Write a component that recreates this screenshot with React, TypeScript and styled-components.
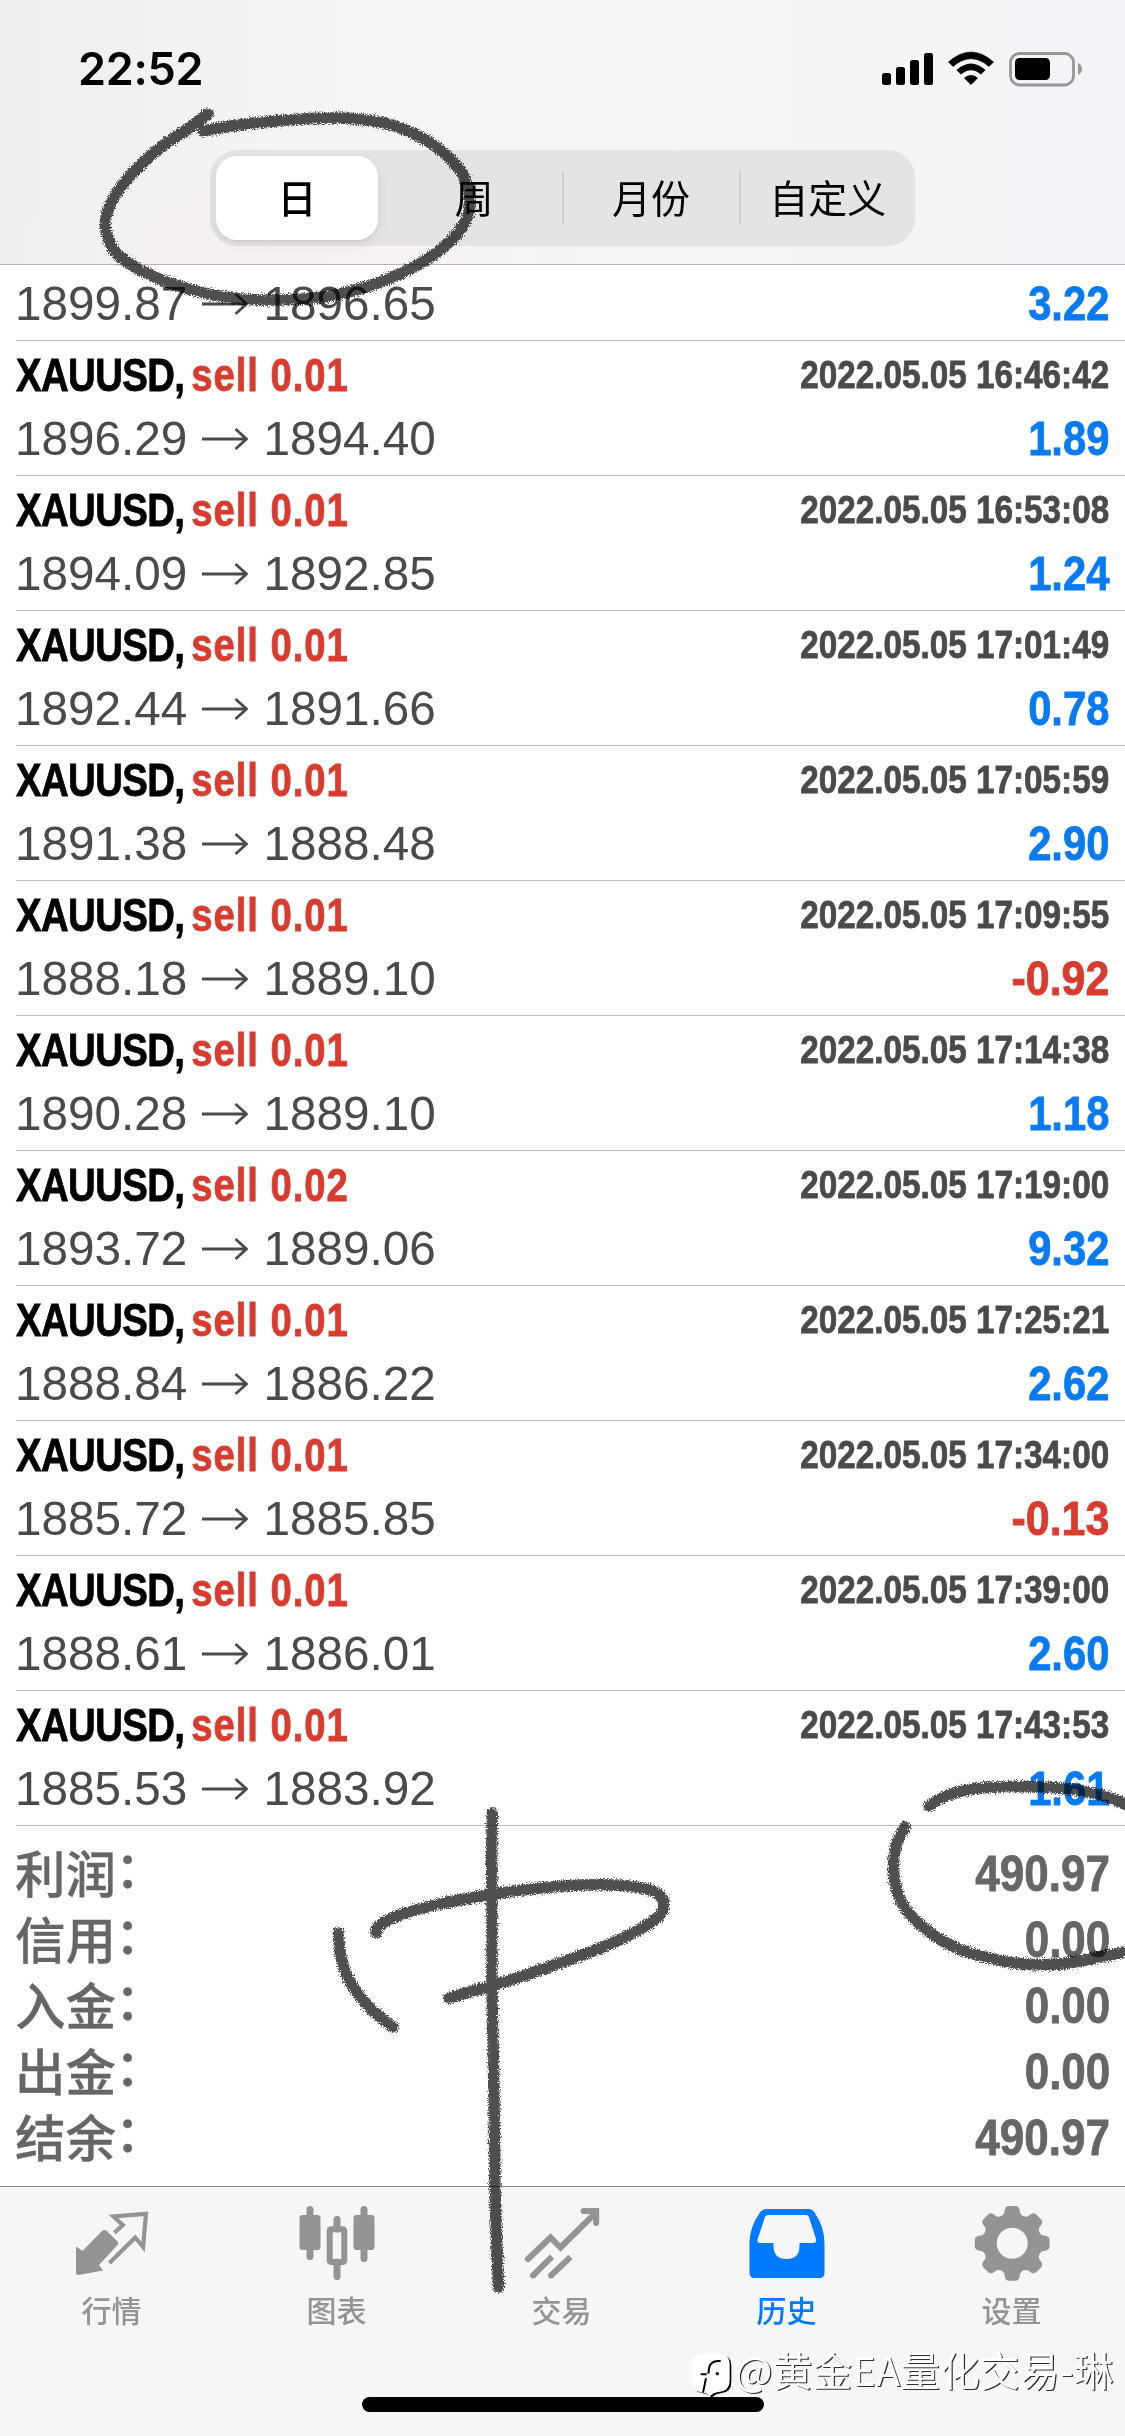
import React from "react";
import styled, { createGlobalStyle } from "styled-components";

const SANS = `"Liberation Sans", Arial, "Noto Sans CJK SC", sans-serif`;
const CJK = `"Noto Sans CJK SC", "Liberation Sans", sans-serif`;
const BLUE = "#087af2";
const RED = "#d93c2f";
const INK = "#4a4a4d";

const GlobalStyle = createGlobalStyle`
  * { box-sizing: border-box; }
  body { margin: 0; background: #fff; }
`;

const Screen = styled.div`
  position: relative;
  width: 1125px;
  height: 2436px;
  overflow: hidden;
  display: flex;
  flex-direction: column;
  background: #fff;
  font-family: ${SANS};
`;

const Header = styled.header`
  height: 265px;
  flex: none;
  display: flex;
  flex-direction: column;
  border-bottom: 1px solid #b2b2b4;
  background:
    radial-gradient(ellipse 300px 140px at 300px 265px, rgba(250, 240, 240, 0.8), rgba(250, 240, 240, 0)),
    linear-gradient(to right, rgba(236, 236, 238, 0.7) 0%, rgba(246, 246, 246, 0) 30%),
    linear-gradient(to right, #f5f5f5 0%, #f6f6f6 60%, #f3f4f8 100%);
`;

const StatusBar = styled.div`
  height: 150px;
  flex: none;
  display: flex;
  justify-content: space-between;
  align-items: flex-start;
  padding: 40px 41px 0 78px;
`;

const Clock = styled.div`
  font: 600 45px/58px Inter, sans-serif;
  letter-spacing: -0.3px;
  color: #000;
`;

const StatusIcons = styled.svg`
  display: block;
  margin-top: 10px;
`;

const Segmented = styled.div`
  width: 705px;
  height: 96px;
  margin: 0 0 0 210px;
  display: grid;
  grid-template-columns: 176.5px 177px 177px 174.5px;
  align-items: center;
  border-radius: 27px;
  background: #e4e4e6;
`;

const Segment = styled.div<{ $active?: boolean; $divider?: boolean }>`
  height: ${(p) => (p.$active ? 84 : 54)}px;
  margin: ${(p) => (p.$active ? "0 8.5px 0 6px" : "0")};
  padding-bottom: 3px;
  display: flex;
  align-items: center;
  justify-content: center;
  border-radius: ${(p) => (p.$active ? 21 : 0)}px;
  border-right: ${(p) => (p.$divider ? "2px solid #cfcfd2" : "0")};
  background: ${(p) => (p.$active ? "#fff" : "transparent")};
  box-shadow: ${(p) => (p.$active ? "0 4px 12px rgba(0,0,0,0.08), 0 2px 2px rgba(0,0,0,0.04)" : "none")};
  font: ${(p) => (p.$active ? 500 : 400)} 39px/51px ${CJK};
  color: #000;
`;

const List = styled.main`
  flex: none;
  display: flex;
  flex-direction: column;
`;

const Row = styled.div<{ $partial?: boolean }>`
  height: ${(p) => (p.$partial ? 76 : 135)}px;
  margin-left: 16px;
  padding: ${(p) => (p.$partial ? 3 : 7)}px 16px 0 0;
  border-bottom: 1px solid #bebec1;
`;

const Line = styled.div<{ $h: number; $gap?: number }>`
  display: flex;
  justify-content: space-between;
  align-items: center;
  height: ${(p) => p.$h}px;
  margin-bottom: ${(p) => p.$gap || 0}px;
  line-height: ${(p) => p.$h}px;
  white-space: nowrap;
`;

const Condensed = styled.span<{ $size: number; $scale: number; $color: string; $right?: boolean; $spacing?: number }>`
  display: inline-block;
  font-size: ${(p) => p.$size}px;
  font-weight: 700;
  letter-spacing: ${(p) => p.$spacing || 0}px;
  color: ${(p) => p.$color};
  -webkit-text-stroke: 0.8px ${(p) => p.$color};
  transform: scaleX(${(p) => p.$scale});
  transform-origin: ${(p) => (p.$right ? "right" : "left")} center;
`;

const Side = styled.span`
  margin-left: -4px;
  letter-spacing: 1.15px;
  color: ${RED};
  -webkit-text-stroke: 0.8px ${RED};
`;

const Prices = styled.span`
  display: flex;
  align-items: center;
  margin-left: -1px;
  font-size: 47.7px;
  color: ${INK};
`;

const Arrow = styled.svg`
  display: block;
  margin: 0 15px 0 14px;
`;

const Summary = styled.section`
  height: 360px;
  flex: none;
  padding: 15px 15px 0 16px;
`;

const SumLabel = styled.span`
  display: flex;
  margin: -7px 0 0 -1px;
  font: 500 50.5px/60px ${CJK};
  color: #666;
  -webkit-text-stroke: 0.3px #666;
`;

const Colon = styled.span`
  margin: -5px 0 0 -1px;
`;

const TabBar = styled.nav`
  height: 250px;
  flex: none;
  display: grid;
  grid-template-columns: repeat(5, 225px);
  border-top: 1px solid #8c8c8c;
  background: #f6f6f6;
`;

const Tab = styled.div<{ $active?: boolean }>`
  display: flex;
  flex-direction: column;
  align-items: center;
  padding: 13px 2px 0 0;
  color: ${(p) => (p.$active ? "#007aff" : "#949494")};
  font: 500 30px/44px ${CJK};
  span { margin-top: 3px; }
`;

const HomeIndicator = styled.div`
  position: absolute;
  left: 362px;
  top: 2397px;
  width: 402px;
  height: 15px;
  border-radius: 8px;
  background: #000;
`;

const Scribbles = styled.svg`
  position: absolute;
  left: 0;
  top: 0;
  mix-blend-mode: multiply;
  pointer-events: none;
`;

const Watermark = styled.div`
  position: absolute;
  left: 690px;
  top: 2341px;
  display: flex;
  align-items: center;
  white-space: nowrap;
  font: 400 39.5px/56px ${CJK};
  letter-spacing: 0.35px;
  color: #fff;
  text-shadow: 1.2px 1.2px 0.6px rgba(0, 0, 0, 0.8);
`;

const WatermarkLogo = styled.svg`
  display: block;
  margin-right: -3px;
`;

type Trade = [string, string, string, string, string];

const trades: Trade[] = [
  ["0.01", "2022.05.05 16:46:42", "1896.29", "1894.40", "1.89"],
  ["0.01", "2022.05.05 16:53:08", "1894.09", "1892.85", "1.24"],
  ["0.01", "2022.05.05 17:01:49", "1892.44", "1891.66", "0.78"],
  ["0.01", "2022.05.05 17:05:59", "1891.38", "1888.48", "2.90"],
  ["0.01", "2022.05.05 17:09:55", "1888.18", "1889.10", "-0.92"],
  ["0.01", "2022.05.05 17:14:38", "1890.28", "1889.10", "1.18"],
  ["0.02", "2022.05.05 17:19:00", "1893.72", "1889.06", "9.32"],
  ["0.01", "2022.05.05 17:25:21", "1888.84", "1886.22", "2.62"],
  ["0.01", "2022.05.05 17:34:00", "1885.72", "1885.85", "-0.13"],
  ["0.01", "2022.05.05 17:39:00", "1888.61", "1886.01", "2.60"],
  ["0.01", "2022.05.05 17:43:53", "1885.53", "1883.92", "1.61"],
];

const totals = [
  ["利润", "490.97"],
  ["信用", "0.00"],
  ["入金", "0.00"],
  ["出金", "0.00"],
  ["结余", "490.97"],
];

function PriceLine({ open, close, profit }: { open: string; close: string; profit: string }) {
  const loss = profit.startsWith("-");
  return (
    <Line $h={71}>
      <Prices>
        {open}
        <Arrow width="47" height="24" viewBox="0 0 47 24" fill="none" stroke={INK} strokeWidth="2.8">
          <path d="M1 12H45M34.5 2L45.5 12L34.5 22" />
        </Arrow>
        {close}
      </Prices>
      <Condensed $size={48} $scale={loss ? 0.895 : 0.87} $color={loss ? RED : BLUE} $right>
        {profit}
      </Condensed>
    </Line>
  );
}

/* Smooth curve through a list of points (Catmull-Rom converted to cubic segments). */
function smooth(pts: number[][]) {
  let d = `M${pts[0][0]} ${pts[0][1]}`;
  for (let i = 0; i < pts.length - 1; i++) {
    const a = pts[i - 1] || pts[i];
    const b = pts[i];
    const c = pts[i + 1];
    const e = pts[i + 2] || c;
    d += `C${b[0] + (c[0] - a[0]) / 6} ${b[1] + (c[1] - a[1]) / 6} ${c[0] - (e[0] - b[0]) / 6} ${c[1] - (e[1] - b[1]) / 6} ${c[0]} ${c[1]}`;
  }
  return d;
}

const strokes: number[][][] = [
  [[208, 114], [189, 128], [153.6, 153], [121, 187], [107, 213], [106.4, 232], [118, 255], [150, 275], [189, 289], [232, 298], [279, 300], [329, 296], [375, 284], [421, 263], [453.6, 238], [468, 215], [469, 195], [460, 170], [429, 142], [386, 123.5], [336, 118], [286, 120], [232, 126], [203.6, 131]],
  [[492.3, 1813], [491.7, 1857], [492, 1923], [492, 1990], [493.3, 2057], [494.3, 2123], [495, 2190], [496.7, 2240], [498.5, 2287]],
  [[376, 1933], [380, 1925], [400, 1915], [440, 1904], [491.7, 1894.5], [540, 1888], [583, 1885], [623, 1885.5], [653, 1891], [663.5, 1902], [658, 1917], [633, 1933], [603, 1947], [560, 1963], [517, 1978], [480, 1989], [449, 1998]],
  [[338.3, 1933], [341, 1957], [350, 1982], [370, 2008], [393, 2027]],
  [[929, 1806], [947, 1795.5], [973, 1789], [1007, 1786.5], [1040, 1787], [1067, 1788.7], [1093, 1793], [1113, 1799], [1130, 1806]],
  [[905, 1827], [897, 1843], [893.5, 1863], [895, 1883], [903, 1905], [923, 1927], [953, 1946.5], [987, 1957.5], [1023, 1964], [1060, 1964], [1100, 1957], [1130, 1951]],
];

function gearPath(cx: number, cy: number) {
  let d = "";
  for (let i = 0; i < 8; i++) {
    const at = (deg: number, r: number) => {
      const t = ((i * 45 + deg - 90) * Math.PI) / 180;
      return `${(cx + r * Math.cos(t)).toFixed(2)} ${(cy + r * Math.sin(t)).toFixed(2)}`;
    };
    d += `${i ? "L" : "M"}${at(-15, 31)}L${at(-12, 35)}Q${at(-10, 37.4)} ${at(-6, 37.6)}L${at(6, 37.6)}Q${at(10, 37.4)} ${at(12, 35)}L${at(15, 31)}Q${at(22.5, 28)} ${at(30, 31)}`;
  }
  return d + "Z";
}

const icons = [
  <svg key="q" width="90" height="84" viewBox="66.500 2200 90 84">
    <path d="M75.5 2246.5L82 2251L101.5 2231Q104 2229 106.500 2231L117 2241.500Q118.500 2243 117 2245L98.500 2265L102.500 2270.500L78 2275Q75.500 2275 75.500 2272.500Z" fill="currentColor" />
    <path d="M114 2232.700L122.300 2225L113 2216.500L145.500 2213.800L142.600 2247L134.700 2237.500L109 2263" fill="none" stroke="currentColor" strokeWidth="4.200" />
  </svg>,
  <svg key="c" width="90" height="84" viewBox="291.500 2200 90 84">
    <g stroke="currentColor" strokeWidth="7" strokeLinecap="round">
      <path d="M309.500 2209.500V2256.500M336.500 2219.500V2229M336.500 2262V2276.500M363.500 2209.500V2258.500" />
    </g>
    <rect x="299" y="2215" width="21" height="35" rx="3" fill="currentColor" />
    <rect x="353" y="2215" width="21" height="35" rx="3" fill="currentColor" />
    <rect x="329.200" y="2229.200" width="14.600" height="32.800" rx="1.500" fill="none" stroke="currentColor" strokeWidth="6" />
  </svg>,
  <svg key="t" width="90" height="84" viewBox="516.500 2200 90 84" fill="none" stroke="currentColor" strokeWidth="6">
    <path d="M527.500 2259L550 2237.500L560 2247.500L595 2213" strokeLinecap="round" />
    <path d="M583 2211H595.700V2223" strokeLinecap="round" />
    <path d="M532.500 2275.500L551.500 2256.700M550.500 2275.500L570 2257" />
    <path d="M532.500 2275.500h.01M550.500 2275.500h.01" strokeLinecap="round" />
  </svg>,
  <svg key="h" width="90" height="84" viewBox="741.5 2200 90 84" fill="currentColor" fillRule="evenodd">
    <path d="M766 2209H808Q812 2209 814 2212.500Q824 2227 824 2243V2273Q824 2278 819 2278H754Q749 2278 749 2273V2243Q749 2227 759.500 2212.500Q762 2209 766 2209ZM768 2215Q765.500 2215 764.500 2217L757.200 2239Q756 2243 759.500 2243H773V2246Q773 2259 786 2259Q799 2259 799 2246V2243H813Q816.500 2243 815.500 2239L808.500 2217Q807.500 2215 805 2215Z" />
  </svg>,
  <svg key="s" width="90" height="84" viewBox="966.5 2200 90 84" fill="currentColor" fillRule="evenodd">
    <path d={gearPath(1011.7, 2243.3) + "M1027.200 2243.300a15.500 15.500 0 1 0 -31 0a15.500 15.500 0 1 0 31 0Z"} />
  </svg>,
];

const tabs = ["行情", "图表", "交易", "历史", "设置"];

export default function App() {
  return (
    <Screen>
      <GlobalStyle />
      <Header>
        <StatusBar>
          <Clock>22:52</Clock>
          <StatusIcons width="204" height="38" viewBox="880 50 204 38">
            <rect x="882" y="73" width="9" height="12" rx="2.500" />
            <rect x="896" y="67" width="9" height="18" rx="2.500" />
            <rect x="910" y="60" width="9" height="25" rx="2.500" />
            <rect x="924" y="53" width="9" height="32" rx="2.500" />
            <path d="M948.5 62Q971 42 993.500 62L989 66.500Q971 51 953 66.500Z" strokeLinejoin="round" stroke="#000" strokeWidth="0.600" />
            <path d="M956.500 70Q971 57 985.500 70L981 74.500Q971 66 961 74.500Z" />
            <path d="M964 78Q971 72 978 78L971 85Z" />
            <rect x="1010.500" y="53.500" width="63" height="31.500" rx="9" fill="none" stroke="#979797" strokeWidth="2.800" />
            <rect x="1015" y="58" width="35" height="22" rx="4.500" />
            <path d="M1078 63Q1082 65.500 1082 69T1078 75Z" fill="#979797" />
          </StatusIcons>
        </StatusBar>
        <Segmented>
          <Segment $active>日</Segment>
          <Segment $divider>周</Segment>
          <Segment $divider>月份</Segment>
          <Segment>自定义</Segment>
        </Segmented>
      </Header>

      <List>
        <Row $partial>
          <PriceLine open="1899.87" close="1896.65" profit="3.22" />
        </Row>
        {trades.map(([lots, time, open, close, profit]) => (
          <Row key={time}>
            <Line $h={54} $gap={1}>
              <Condensed $size={47} $scale={0.815} $color="#000" $spacing={-0.7}>
                XAUUSD, <Side>sell {lots}</Side>
              </Condensed>
              <Condensed $size={39} $scale={0.853} $color={INK} $right>
                {time}
              </Condensed>
            </Line>
            <PriceLine open={open} close={close} profit={profit} />
          </Row>
        ))}
      </List>

      <Summary>
        {totals.map(([label, value]) => (
          <Line key={label} $h={66}>
            <SumLabel>
              {label}
              <Colon>：</Colon>
            </SumLabel>
            <Condensed $size={50} $scale={0.88} $color="#666" $right>
              {value}
            </Condensed>
          </Line>
        ))}
      </Summary>

      <TabBar>
        {tabs.map((name, i) => (
          <Tab key={name} $active={i === 3}>
            {icons[i]}
            <span>{name}</span>
          </Tab>
        ))}
      </TabBar>

      <HomeIndicator />
      <Scribbles width="1125" height="2436" viewBox="0 0 1125 2436">
        <filter id="pencil" filterUnits="userSpaceOnUse" x="0" y="0" width="1125" height="2436">
          <feTurbulence type="fractalNoise" baseFrequency="0.85" numOctaves="1" seed="4" />
          <feDisplacementMap in="SourceGraphic" scale="8" xChannelSelector="R" yChannelSelector="G" />
        </filter>
        <g filter="url(#pencil)" fill="none" stroke="#4f4f4f" strokeWidth="11.500" strokeLinecap="round" strokeLinejoin="round">
          {strokes.map((s, i) => (
            <path key={i} d={smooth(s)} />
          ))}
        </g>
      </Scribbles>
      <Watermark>
        <WatermarkLogo width="48" height="56" viewBox="690 2341 48 56">
          <g transform="translate(680 2330) scale(0.3333)">
            <path d="M68 76H122Q154 76 154 108V156Q154 188 122 190Q106 191 95 204Q88 192 68 190Q40 188 40 156V108Q40 76 68 76Z" fill="#000" />
            <path d="M64 72H118Q149 72 149 104V152Q149 183 116 186Q100 187 90 199Q84 189 66 188Q35 184 35 152V104Q35 72 64 72Z" fill="#fff" />
            <path d="M122 93Q90 90 87 116L85 131M62 133H80M78 145L69 188" fill="none" stroke="#000" strokeWidth="6" />
            <circle cx="112" cy="131" r="5" />
          </g>
        </WatermarkLogo>
        <span>@黄金EA量化交易-琳</span>
      </Watermark>
    </Screen>
  );
}
